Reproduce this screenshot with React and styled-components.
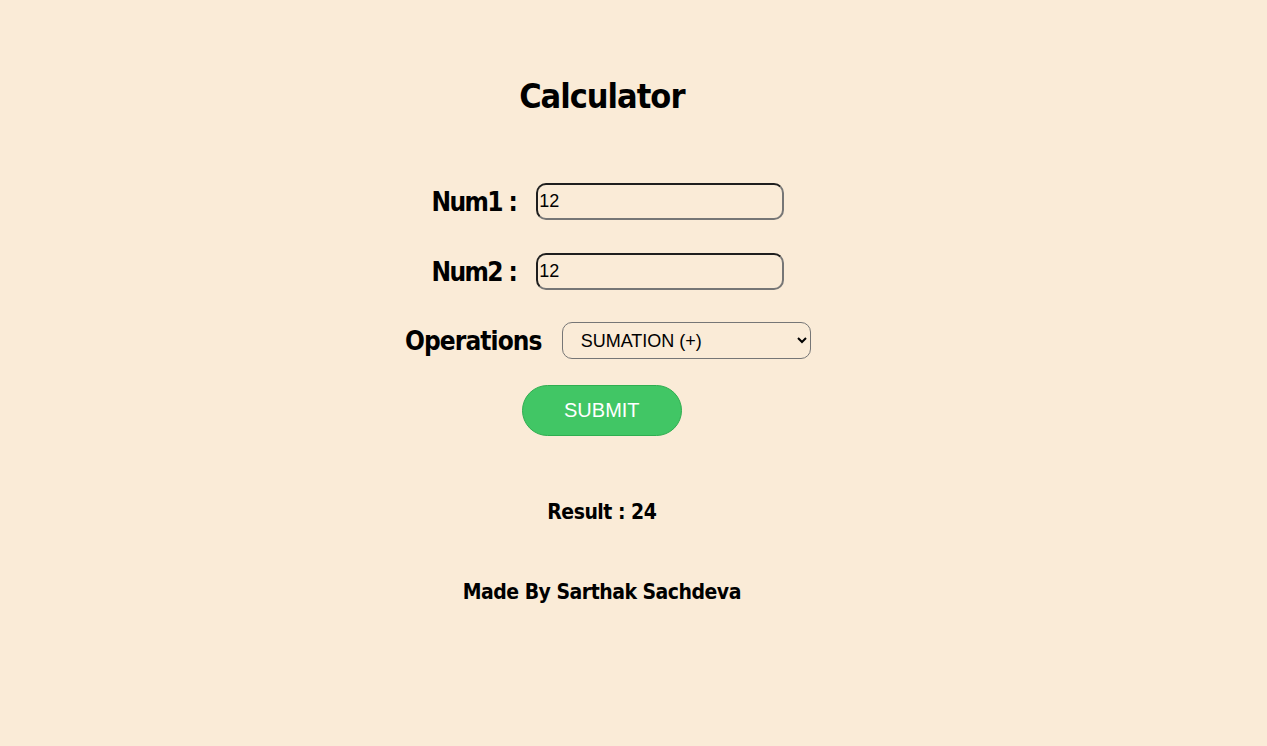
import React from "react";
import styled, { createGlobalStyle } from "styled-components";

const Global = createGlobalStyle`
  html, body { margin: 0; padding: 0; background: #faebd7; }
  body { font-family: "DejaVu Sans Condensed", "Liberation Sans Narrow", "Liberation Sans", sans-serif; color: #000; }
`;

const Page = styled.main`
  width: 95%;
  min-height: 746px;
  display: flex;
  flex-direction: column;
  align-items: center;
  padding-top: 74px;
  box-sizing: border-box;
`;

const Title = styled.h1`
  margin: 0 0 65px;
  font-size: 34px;
  line-height: 44px;
  font-weight: 700;
  letter-spacing: -1px;
`;

const Row = styled.div`
  display: flex;
  align-items: center;
  gap: 20px;
  margin-left: 12px;
  margin-bottom: ${(p) => p.$mb}px;
`;

const Label = styled.label`
  font-size: 26px;
  font-weight: 700;
  letter-spacing: ${(p) => (p.$tight ? -1.6 : -0.9)}px;
`;

const Input = styled.input`
  width: 248px;
  height: 37px;
  box-sizing: border-box;
  border: 2px solid;
  border-color: #1e1e1e #767676 #767676 #1e1e1e;
  border-radius: 10px;
  background: transparent;
  padding: 0 0 0 1px;
  font-family: "Liberation Sans", Arial, sans-serif;
  font-size: 18px;
  color: #000;
  outline: none;
`;

const Select = styled.select`
  width: 249px;
  height: 37px;
  box-sizing: border-box;
  border: 1px solid #767676;
  border-radius: 10px;
  background: transparent;
  padding-left: 14px;
  font-family: "Liberation Sans", Arial, sans-serif;
  font-size: 18px;
  color: #000;
`;

const Submit = styled.button`
  width: 160px;
  height: 51px;
  border-radius: 26px;
  border: 1px solid #2fae50;
  background: #41c665;
  color: #fff;
  font-family: "Liberation Sans", Arial, sans-serif;
  font-size: 20px;
  margin-bottom: 60px;
`;

const Result = styled.p`
  margin: 0 0 48px;
  font-size: 21px;
  line-height: 32px;
  font-weight: 700;
  letter-spacing: -0.5px;
`;

const Credit = styled.h3`
  margin: 0;
  font-size: 21px;
  line-height: 32px;
  font-weight: 700;
  letter-spacing: -0.5px;
`;

export default function App() {
  return (
    <>
      <Global />
      <Page>
        <Title>Calculator</Title>
        <Row $mb={33}>
          <Label $tight htmlFor="n1">Num1 :</Label>
          <Input id="n1" defaultValue="12" />
        </Row>
        <Row $mb={32}>
          <Label $tight htmlFor="n2">Num2 :</Label>
          <Input id="n2" defaultValue="12" />
        </Row>
        <Row $mb={26}>
          <Label htmlFor="op">Operations</Label>
          <Select id="op" defaultValue="sum">
            <option value="sum">SUMATION (+)</option>
            <option value="sub">SUBTRACTION (-)</option>
            <option value="mul">MULTIPLICATION (*)</option>
            <option value="div">DIVISION (/)</option>
          </Select>
        </Row>
        <Submit>SUBMIT</Submit>
        <Result>Result : 24</Result>
        <Credit>Made By Sarthak Sachdeva</Credit>
      </Page>
    </>
  );
}
